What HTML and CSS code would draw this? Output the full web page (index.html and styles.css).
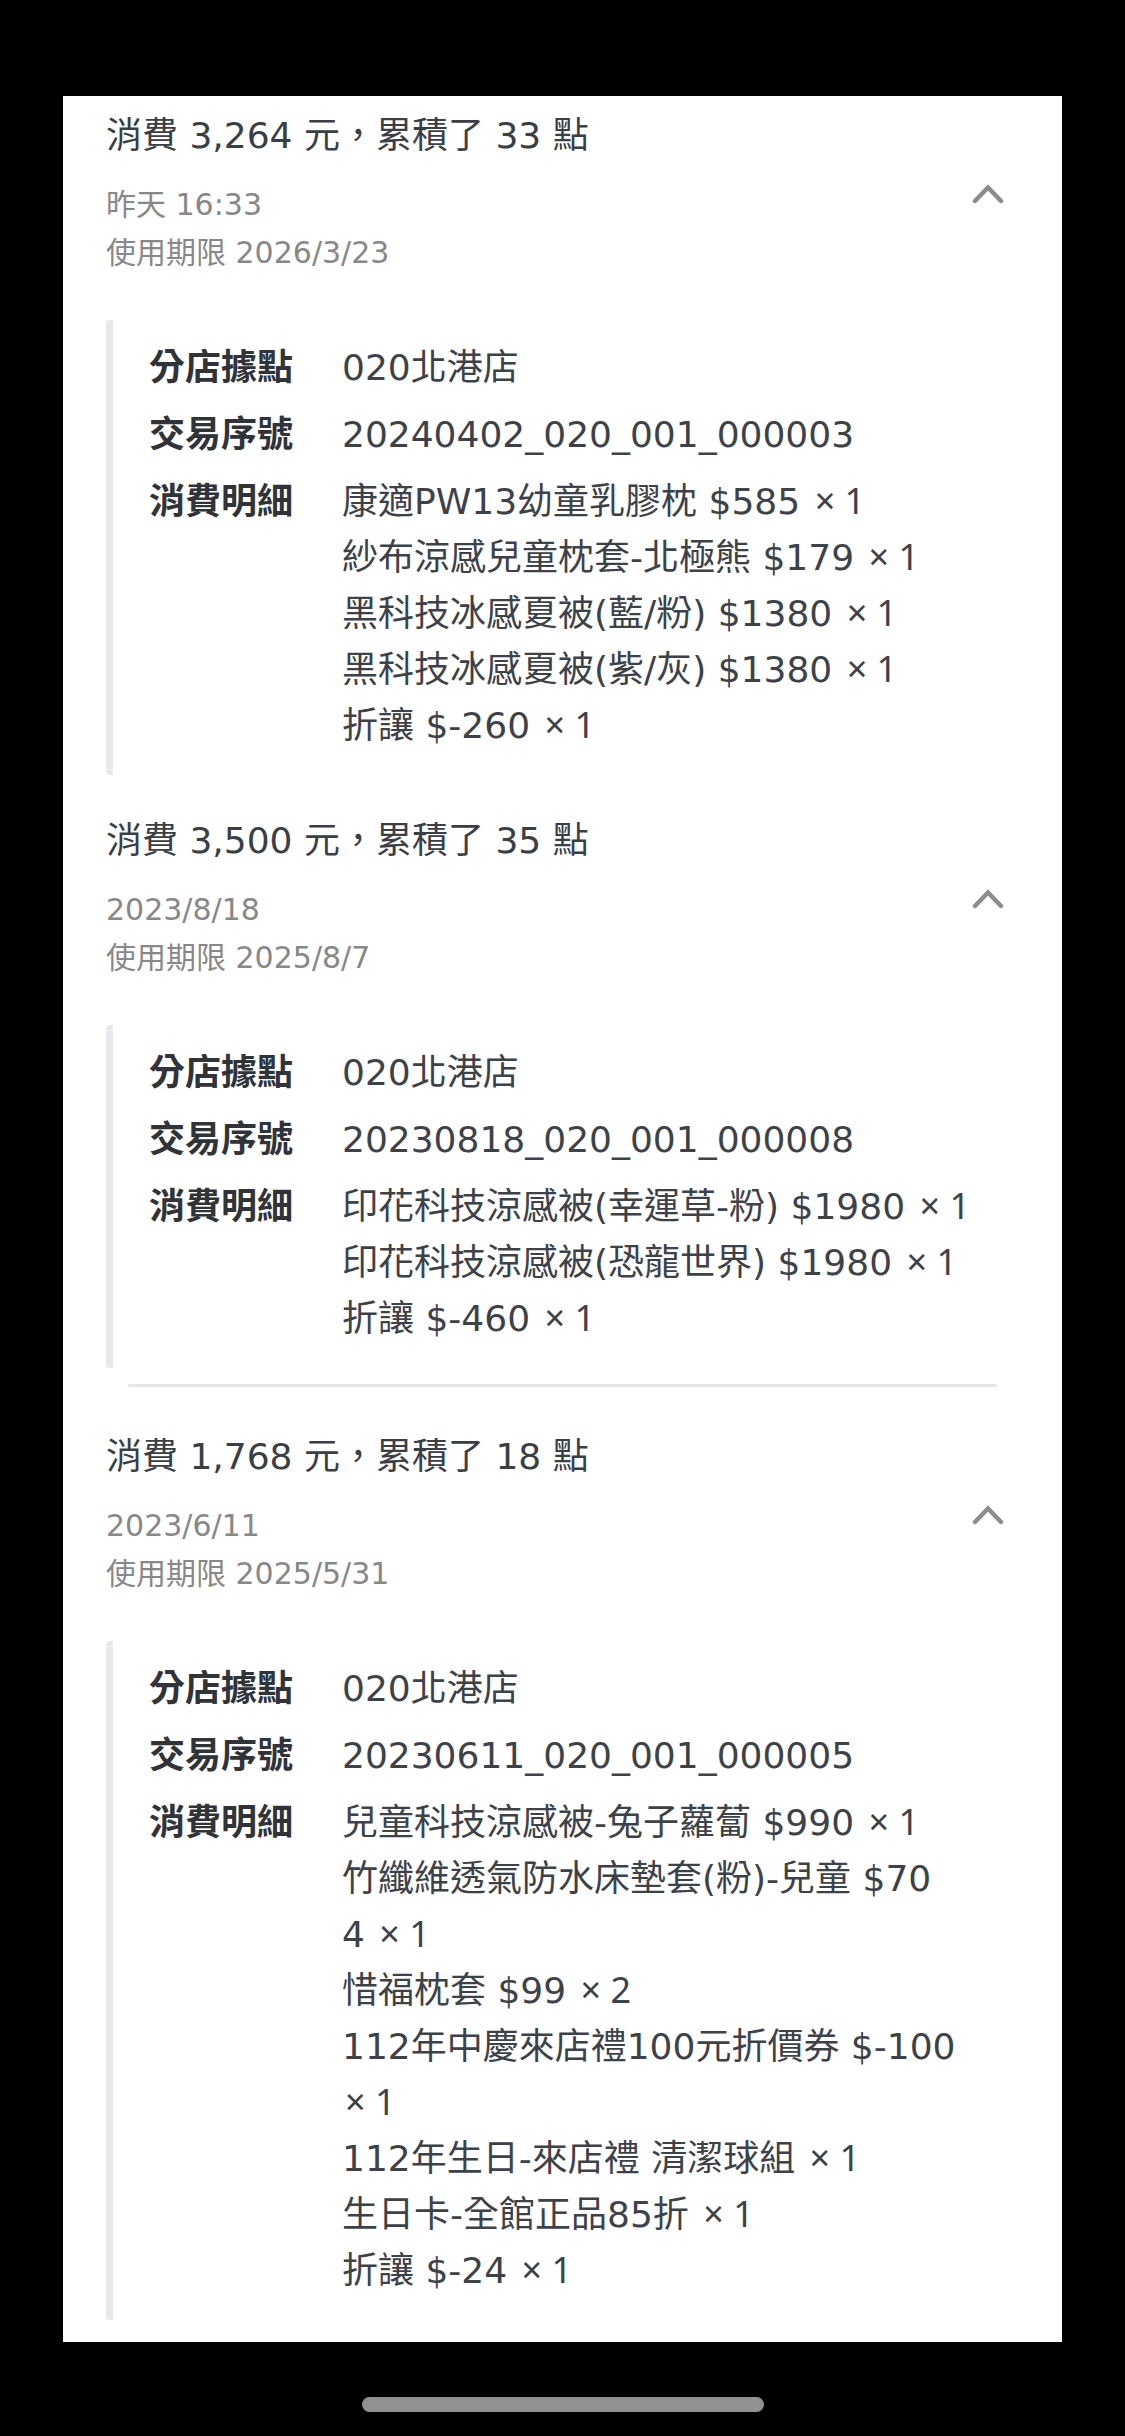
FILE: index.html
```html
<!DOCTYPE html>
<html lang="zh-Hant">
<head>
<meta charset="utf-8">
<title>消費紀錄</title>
<link rel="stylesheet" href="styles.css">
</head>
<body>
<div class="screen">
  <main class="card">
    <section class="record">
      <div class="record-head">
        <div class="head-text">
          <h2 class="title">消費 3,264 元，累積了 33 點</h2>
          <div class="meta">
            <div>昨天 16:33</div>
            <div>使用期限 2026/3/23</div>
          </div>
        </div>
        <svg class="toggle" viewBox="0 0 32 22"><polyline points="3,17 16,3.5 29,17" fill="none" stroke="#8c8c8c" stroke-width="4.5" stroke-linecap="round" stroke-linejoin="miter"/></svg>
      </div>
      <dl class="detail">
        <dt>分店據點</dt>
        <dd>020北港店</dd>
        <dt>交易序號</dt>
        <dd>20240402_020_001_000003</dd>
        <dt>消費明細</dt>
        <dd class="items">
          <div>康適PW13幼童乳膠枕 $585 <span class="qty">× 1</span></div>
          <div>紗布涼感兒童枕套-北極熊 $179 <span class="qty">× 1</span></div>
          <div>黑科技冰感夏被(藍/粉) $1380 <span class="qty">× 1</span></div>
          <div>黑科技冰感夏被(紫/灰) $1380 <span class="qty">× 1</span></div>
          <div>折讓 $-260 <span class="qty">× 1</span></div>
        </dd>
      </dl>
    </section>

    <section class="record">
      <div class="record-head">
        <div class="head-text">
          <h2 class="title">消費 3,500 元，累積了 35 點</h2>
          <div class="meta">
            <div>2023/8/18</div>
            <div>使用期限 2025/8/7</div>
          </div>
        </div>
        <svg class="toggle" viewBox="0 0 32 22"><polyline points="3,17 16,3.5 29,17" fill="none" stroke="#8c8c8c" stroke-width="4.5" stroke-linecap="round" stroke-linejoin="miter"/></svg>
      </div>
      <dl class="detail">
        <dt>分店據點</dt>
        <dd>020北港店</dd>
        <dt>交易序號</dt>
        <dd>20230818_020_001_000008</dd>
        <dt>消費明細</dt>
        <dd class="items">
          <div>印花科技涼感被(幸運草-粉) $1980 <span class="qty">× 1</span></div>
          <div>印花科技涼感被(恐龍世界) $1980 <span class="qty">× 1</span></div>
          <div>折讓 $-460 <span class="qty">× 1</span></div>
        </dd>
      </dl>
    </section>

    <hr class="divider">

    <section class="record">
      <div class="record-head">
        <div class="head-text">
          <h2 class="title">消費 1,768 元，累積了 18 點</h2>
          <div class="meta">
            <div>2023/6/11</div>
            <div>使用期限 2025/5/31</div>
          </div>
        </div>
        <svg class="toggle" viewBox="0 0 32 22"><polyline points="3,17 16,3.5 29,17" fill="none" stroke="#8c8c8c" stroke-width="4.5" stroke-linecap="round" stroke-linejoin="miter"/></svg>
      </div>
      <dl class="detail">
        <dt>分店據點</dt>
        <dd>020北港店</dd>
        <dt>交易序號</dt>
        <dd>20230611_020_001_000005</dd>
        <dt>消費明細</dt>
        <dd class="items">
          <div>兒童科技涼感被-兔子蘿蔔 $990 <span class="qty">× 1</span></div>
          <div>竹纖維透氣防水床墊套(粉)-兒童 $70<br>4 <span class="qty">× 1</span></div>
          <div>惜福枕套 $99 <span class="qty">× 2</span></div>
          <div>112年中慶來店禮100元折價券 $-100<br><span class="qty">× 1</span></div>
          <div>112年生日-來店禮 清潔球組 <span class="qty">× 1</span></div>
          <div>生日卡-全館正品85折 <span class="qty">× 1</span></div>
          <div>折讓 $-24 <span class="qty">× 1</span></div>
        </dd>
      </dl>
    </section>
  </main>
  <div class="home-bar"></div>
</div>
</body>
</html>
```

FILE: styles.css
```css
html, body {
  margin: 0;
  padding: 0;
  background: #000;
}

body {
  font-family: "DejaVu Sans", "Noto Sans CJK TC", sans-serif;
}

.screen {
  height: 2436px;
  box-sizing: border-box;
  padding: 96px 63px 0;
  display: flex;
  flex-direction: column;
  overflow: hidden;
}

.card {
  background: #fff;
  padding: 16px 43px 22px;
}

.record + .record {
  margin-top: 42px;
}

.divider {
  border: 0;
  height: 3px;
  background: #e6e6ea;
  border-radius: 2px;
  margin: 16px 22px 46px;
}

.record-head {
  display: flex;
  align-items: center;
  justify-content: space-between;
}

.title {
  margin: 0;
  font-size: 36px;
  line-height: 48px;
  font-weight: 400;
  color: #3a3e45;
}

.meta {
  margin-top: 21px;
  font-size: 30px;
  line-height: 48px;
  color: #888;
}

.toggle {
  width: 32px;
  height: 22px;
  margin-right: 15px;
  flex: none;
}

.detail {
  margin: 43px 0 0;
  border-left: 7px solid #e9e9ed;
  border-radius: 4px;
  padding: 20px 0 21px 36px;
  display: grid;
  grid-template-columns: 144px 1fr;
  column-gap: 49px;
  row-gap: 11px;
  font-size: 36px;
  line-height: 56px;
  color: #3d4249;
}

.detail dt {
  font-weight: 700;
  color: #303439;
}

.detail dd {
  margin: 0;
}

.items div {
  white-space: nowrap;
}

.qty {
  font-family: "Noto Sans", "DejaVu Sans", sans-serif;
  line-height: 1;
  padding-left: 3px;
}

.home-bar {
  width: 402px;
  height: 15px;
  border-radius: 8px;
  background: #919191;
  margin: 55px auto 0;
  flex: none;
}
```
